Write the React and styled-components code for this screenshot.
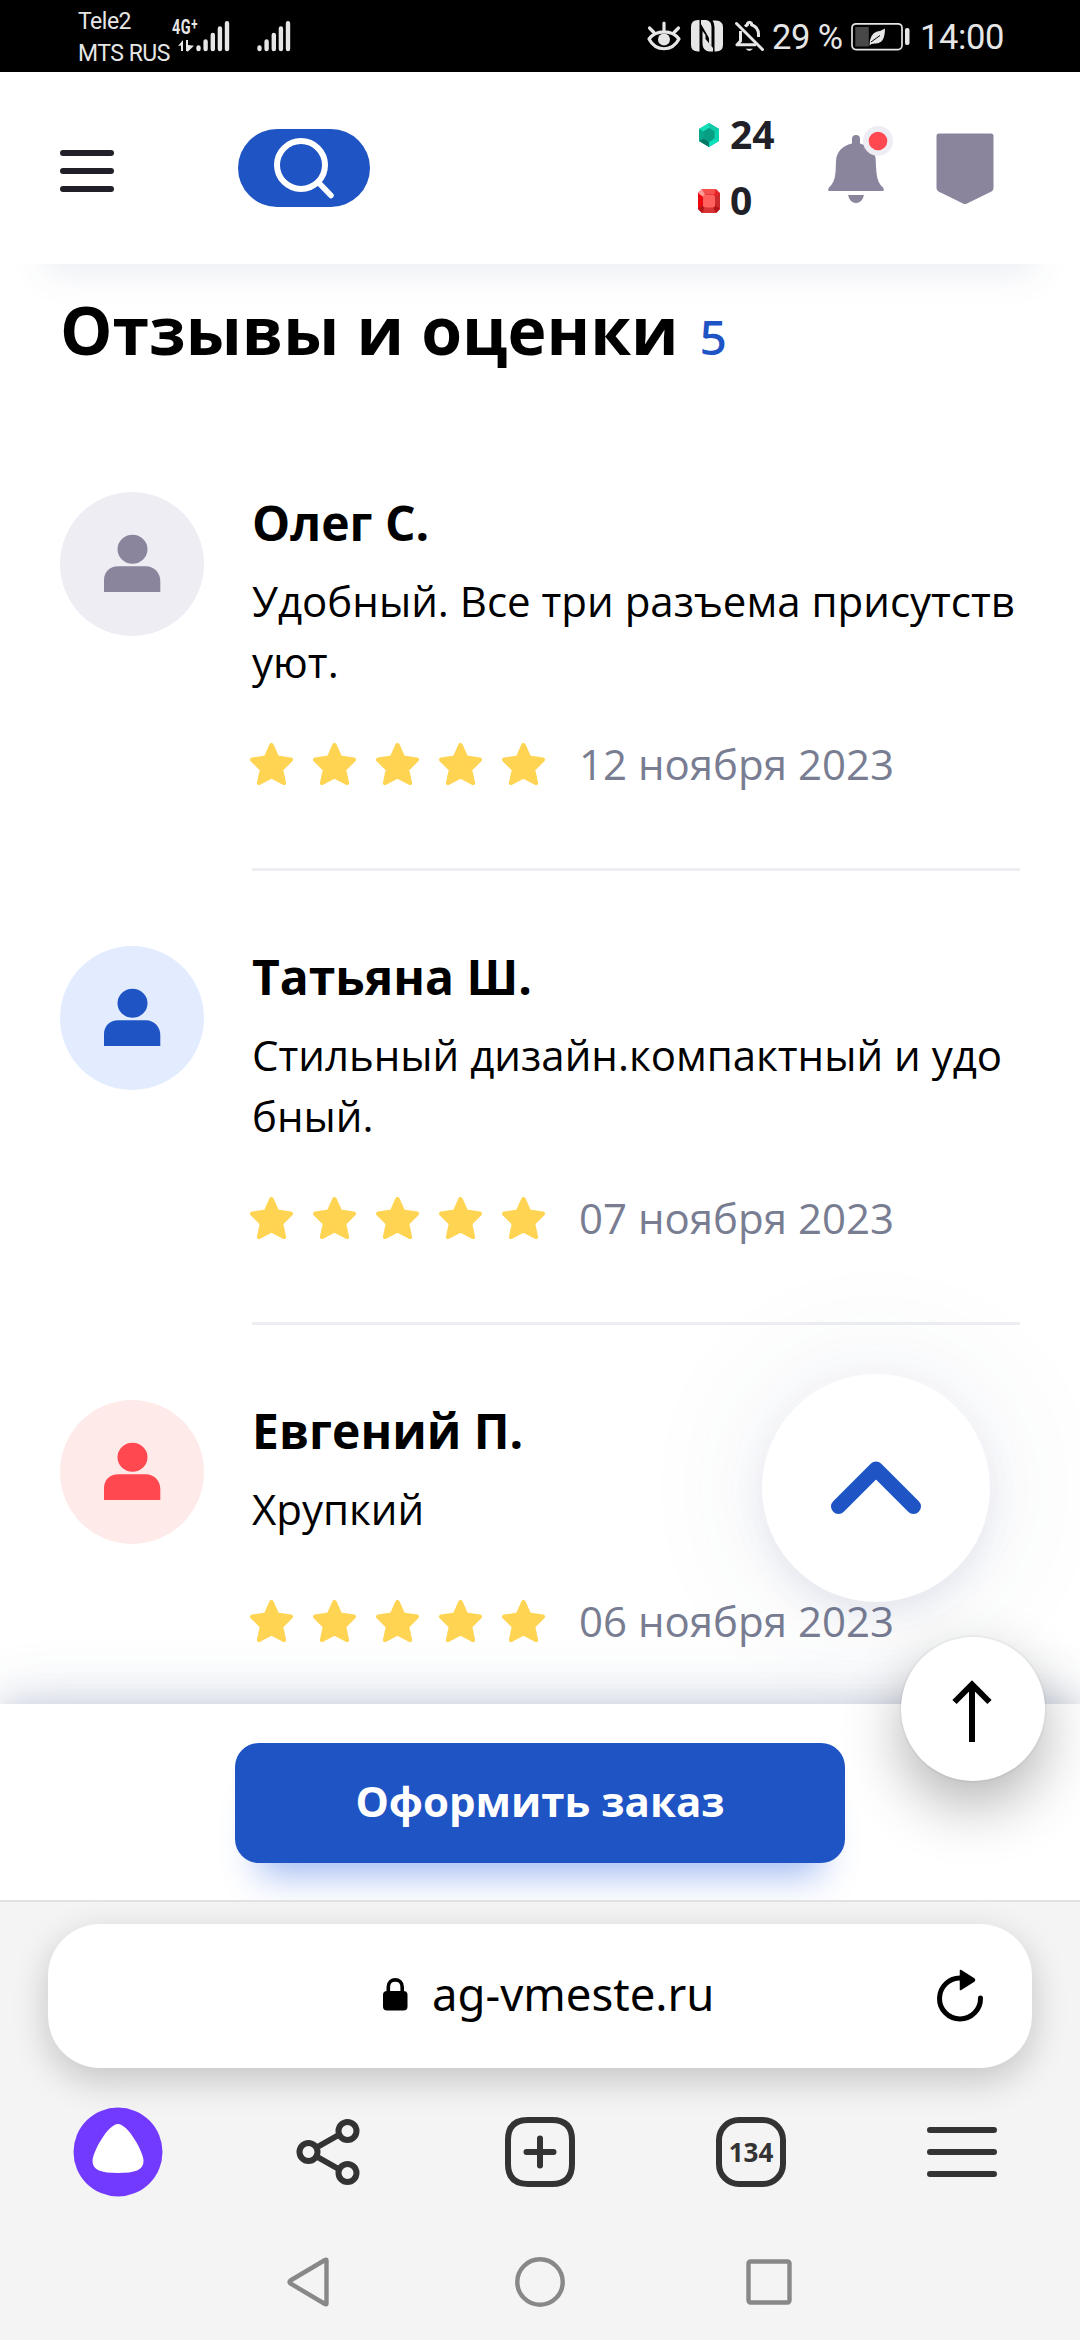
import React from "react";
import styled, { createGlobalStyle } from "styled-components";

const Global = createGlobalStyle`
  * { box-sizing: border-box; }
  body { margin: 0; background: #fff; }
`;

const Screen = styled.div`
  position: relative;
  width: 1080px;
  height: 2340px;
  display: grid;
  grid-template-rows: 72px 192px 1440px 196px 440px;
  overflow: hidden;
  background: #fff;
  color: #000;
  font-family: "Open Sans", "Noto Sans", sans-serif;
  svg { display: block; flex: none; }
`;

/* ---------- system status bar ---------- */
const StatusBar = styled.div`
  display: flex;
  justify-content: space-between;
  align-items: flex-start;
  background: #000;
  color: #e6e6e6;
  font-family: Roboto, sans-serif;
  padding: 0 77px 0 78px;
`;
const StatusGroup = styled.div`
  display: flex;
  height: 72px;
`;
const Carriers = styled.div`
  padding-top: 6px;
  width: 94px;
  font-size: 23px;
  line-height: 32px;
  white-space: nowrap;
  letter-spacing: -0.5px;
`;
const Network = styled.div`
  width: 24px;
  padding-top: 18px;
  display: flex;
  flex-direction: column;
  align-items: flex-start;
  gap: 3px;
`;
const NetworkType = styled.span`
  font-size: 20px;
  line-height: 19px;
  height: 19px;
  font-weight: 700;
  white-space: nowrap;
  transform: scaleX(0.72);
  transform-origin: left;
  letter-spacing: 0.8px;
  sup { font-size: 16px; line-height: 0; vertical-align: 4px; }
`;
const Arrows = styled.svg` margin-left: 6px; `;
const Signal = styled.svg`
  margin: 20px ${(p) => p.$after || 0}px 0 0;
`;
const StatusIcon = styled.svg`
  margin: 20px ${(p) => p.$after}px 0 0;
`;
const StatusText = styled.span`
  font-size: 34.5px;
  line-height: 74px;
  white-space: nowrap;
  width: ${(p) => p.$w}px;
  letter-spacing: ${(p) => p.$ls || 0}px;
`;

const SignalBars = ({ after }) => (
  <Signal $after={after} width="34" height="32" viewBox="0 0 34 32" fill="none" stroke="#e6e6e6" strokeWidth="4.4" strokeLinecap="round">
    <path d="M2.5 27.5V29M9.6 21.5V29M16.8 15V29M23.9 8.5V29M31 3.2V29" />
  </Signal>
);

/* ---------- site header ---------- */
const Header = styled.header`
  position: relative;
  z-index: 2;
  display: flex;
  align-items: flex-start;
  padding: 57px 86px 0 60px;
  background: #fff;
  box-shadow: 0 54px 36px -45px rgba(60, 80, 125, 0.1);
`;
const Burger = styled.button`
  display: flex;
  flex-direction: column;
  gap: 12px;
  width: 54px;
  margin: 21px 124px 0 0;
  padding: 0;
  border: 0;
  background: none;
`;
const BurgerBar = styled.span`
  height: 6px;
  border-radius: 3px;
  background: #211f27;
`;
const SearchButton = styled.button`
  display: flex;
  width: 132px;
  height: 78px;
  padding: 8px 0 0 35px;
  border: 0;
  border-radius: 39px;
  background: #1f54c5;
`;
const Balance = styled.div`
  margin-left: auto;
  margin-top: -27px;
  width: 130px;
  display: flex;
  flex-direction: column;
`;
const BalanceRow = styled.div`
  display: flex;
  align-items: center;
  gap: 10px;
  height: 66px;
  font-size: 39px;
  font-weight: 700;
  line-height: 66px;
  color: #211f27;
`;
const BalanceValue = styled.span`
  height: 68px;
`;
const BellIcon = styled.svg` margin: -3px 42px 0 0; `;
const ShieldIcon = styled.svg` margin-top: 4px; `;

/* ---------- reviews ---------- */
const Reviews = styled.main`
  padding: 20px 60px 0;
  overflow: hidden;
`;
const Heading = styled.h1`
  display: flex;
  align-items: flex-start;
  gap: 21px;
  height: 90px;
  margin: 0 0 118px;
  font-size: 66px;
  line-height: 90px;
  font-weight: 700;
  white-space: nowrap;
`;
const Count = styled.span`
  padding-top: 8px;
  font-family: "Noto Sans", "Open Sans", sans-serif;
  font-size: 48px;
  font-weight: 500;
  color: #1f54c5;
`;
const Review = styled.article`
  display: grid;
  grid-template-columns: 144px 768px;
  column-gap: 48px;
  margin-bottom: 75px;
`;
const Avatar = styled.div`
  width: 144px;
  height: 144px;
  border-radius: 50%;
  background: ${(p) => p.$bg};
  padding: 42px 0 0 44px;
`;
const ReviewBody = styled.div`
  padding-bottom: 75px;
  border-bottom: 3px solid #eeeef2;
`;
const Author = styled.h2`
  margin: 0 0 17px;
  padding-top: 1px;
  font-size: 48px;
  line-height: 60px;
  font-weight: 700;
`;
const Comment = styled.p`
  margin: 0 0 43px;
  min-height: 71px;
  font-size: 42px;
  line-height: 61px;
  white-space: nowrap;
`;
const Meta = styled.div`
  display: flex;
  align-items: center;
  height: 58px;
`;
const Stars = styled.div`
  display: flex;
  gap: 20px;
  margin: 0 34px 0 -2px;
`;
const ReviewDate = styled.time`
  font-size: 42px;
  line-height: 58px;
  color: #787d92;
  white-space: nowrap;
`;

/* ---------- order bar ---------- */
const OrderBar = styled.div`
  position: relative;
  z-index: 1;
  display: flex;
  justify-content: center;
  align-items: flex-start;
  padding-top: 39px;
  background: #fff;
  box-shadow: 0 0 60px rgba(60, 85, 135, 0.2), 0 0 30px rgba(60, 85, 135, 0.18);
`;
const OrderButton = styled.button`
  width: 610px;
  height: 120px;
  padding: 0 0 4px;
  border: 0;
  border-radius: 24px;
  background: #1f54c5;
  box-shadow: 0 36px 36px -24px rgba(45, 100, 225, 0.45);
  color: #fff;
  font: 700 42px/58px "Open Sans", "Noto Sans", sans-serif;
`;

/* ---------- floating buttons ---------- */
const ScrollUp = styled.button`
  position: absolute;
  z-index: 3;
  left: 762px;
  top: 1374px;
  width: 228px;
  height: 228px;
  padding: 0;
  display: grid;
  place-items: center;
  border: 0;
  border-radius: 50%;
  background: #fff;
  box-shadow: 0 0 132px rgba(60, 75, 130, 0.1), 0 14px 36px -6px rgba(60, 70, 130, 0.12);
`;
const JumpTop = styled(ScrollUp)`
  left: 901px;
  top: 1637px;
  width: 144px;
  height: 144px;
  padding-top: 4px;
  box-shadow: 0 0 0 2px rgba(0, 0, 0, 0.03), 0 24px 60px rgba(0, 0, 0, 0.3);
`;

/* ---------- browser chrome ---------- */
const Browser = styled.footer`
  position: relative;
  z-index: 2;
  display: grid;
  grid-template-rows: 144px 129px auto;
  align-content: start;
  padding: 22px 48px 0;
  border-top: 2px solid #e2e2e2;
  background: #f4f4f4;
`;
const AddressBar = styled.div`
  display: flex;
  align-items: flex-start;
  height: 144px;
  padding: 0 48px 0 335px;
  border-radius: 52px;
  background: #fff;
  box-shadow: 0 12px 36px rgba(0, 0, 0, 0.2);
`;
const LockIcon = styled.svg` margin-top: 54px; `;
const Url = styled.span`
  margin-left: 24px;
  font-family: "Noto Sans", sans-serif;
  font-size: 45.5px;
  line-height: 138px;
`;
const ReloadIcon = styled.svg` margin: 44px 0 0 auto; `;
const Toolbar = styled.nav`
  display: flex;
  justify-content: space-between;
  align-items: flex-start;
  margin: 39px 25px 0;
  height: 90px;
`;
const ToolSlot = styled.div`
  display: flex;
  align-items: center;
  justify-content: center;
  height: 90px;
  width: 90px;
`;
const TabCount = styled.div`
  display: grid;
  place-items: center;
  width: 70px;
  height: 70px;
  border: 6px solid #333;
  border-radius: 23px;
  color: #333;
  font-family: "Noto Sans", sans-serif;
  font-size: 26px;
  line-height: 28px;
  font-weight: 700;
`;
const SystemNav = styled.nav`
  display: flex;
  justify-content: space-between;
  align-items: center;
  width: 506px;
  margin-left: 238px;
  margin-top: 59px;
  height: 52px;
`;
const HomeIcon = styled.svg` margin-left: 4px; `;

const STAR = "M21.5 2.2 27.2 14.8 40.8 16.7 31 26.4 33.9 39.9 21.5 33.2 9.1 39.9 12 26.4 2.2 16.7 15.8 14.8Z";

const reviews = [
  { name: "Олег С.", lines: ["Удобный. Все три разъема присутств", "уют."], date: "12 ноября 2023", bg: "#eeedf3", fg: "#8b849d" },
  { name: "Татьяна Ш.", lines: ["Стильный дизайн.компактный и удо", "бный."], date: "07 ноября 2023", bg: "#e3ecff", fg: "#1f54c5" },
  { name: "Евгений П.", lines: ["Хрупкий"], date: "06 ноября 2023", bg: "#ffeaea", fg: "#ff484f" },
];

function ReviewItem({ name, lines, date, bg, fg }) {
  return (
    <Review>
      <Avatar $bg={bg}>
        <svg width="58" height="60" viewBox="0 0 58 60" fill={fg}>
          <ellipse cx="28.5" cy="15.3" rx="15" ry="14.5" />
          <path d="M0 58V46C0 38 6 32.3 14 32.3H42C50 32.3 56.3 39 56.3 47V58Z" />
        </svg>
      </Avatar>
      <ReviewBody>
        <Author>{name}</Author>
        <Comment>
          {lines.map((line, i) => (
            <React.Fragment key={line}>
              {i > 0 && <br />}
              {line}
            </React.Fragment>
          ))}
        </Comment>
        <Meta>
          <Stars>
            {[0, 1, 2, 3, 4].map((n) => (
              <svg key={n} width="43" height="42" viewBox="0 0 43 42">
                <path d={STAR} fill="#ffd452" stroke="#ffd452" strokeWidth="4.4" strokeLinejoin="round" />
              </svg>
            ))}
          </Stars>
          <ReviewDate>{date}</ReviewDate>
        </Meta>
      </ReviewBody>
    </Review>
  );
}

export default function App() {
  return (
    <Screen>
      <Global />
      <StatusBar>
        <StatusGroup>
          <Carriers>
            <div>Tele2</div>
            <div>MTS RUS</div>
          </Carriers>
          <Network>
            <NetworkType>4G<sup>+</sup></NetworkType>
            <Arrows width="16" height="12" viewBox="0 0 16 12" fill="#e6e6e6">
              <path d="M0 6 5 0V11H3V5.5ZM8 0H10V5L16 5.8 10 11.5 8 11Z" />
            </Arrows>
          </Network>
          <SignalBars after={27} />
          <SignalBars />
        </StatusGroup>
        <StatusGroup>
          <StatusIcon $after={10} width="34" height="32" viewBox="0 0 34 32" fill="none" stroke="#e6e6e6" strokeWidth="3.2" strokeLinecap="round">
            <path d="M2 19C9 9.5 25 9.5 32 19C25 32 9 32 2 19Z" strokeLinejoin="round" />
            <path d="M17 3V10M2.5 8 7 12.5M31.5 8 27 12.5" />
            <circle cx="17" cy="19.5" r="6" fill="#e6e6e6" stroke="none" />
          </StatusIcon>
          <StatusIcon $after={12} width="32" height="32" viewBox="0 0 32 32">
            <path d="M7 0H8.5V31.5H7Q0 31 0 25V7Q0 0 7 0Z" fill="#e6e6e6" />
            <path d="M10 0H15Q20.5 1 20.5 7V26L18 23.5V18L10 4Z" fill="#e6e6e6" />
            <path d="M25 .5Q32 1 32 7V25Q32 31 25 31.5H23.5V7Q23.5 3 21.5 .5Z" fill="#e6e6e6" />
            <path d="M11.5 11V24Q12 31 18 31.5H22V28L14.5 19V15Z" fill="#e6e6e6" />
          </StatusIcon>
          <StatusIcon $after={8} width="29" height="32" viewBox="0 0 29 32" fill="none" stroke="#e6e6e6" strokeWidth="3">
            <path d="M5.5 11V21L2 24.8H21M10 6.5C11 5.5 12 5 12.5 4.7V3.5Q14.5 .8 16.5 3.5V4.7Q23.5 7 23.5 14.5V17" strokeLinejoin="round" />
            <path d="M1.5 3.5 27.5 29.5" strokeLinecap="round" />
            <path d="M10.5 28.8H18Q14.3 33 10.5 28.8Z" fill="#e6e6e6" stroke="none" />
          </StatusIcon>
          <StatusText $w={79} $ls={-0.5}>29 %</StatusText>
          <StatusIcon $after={10} width="59" height="32" viewBox="0 0 59 32">
            <rect x="1" y="3.8" width="50" height="25.8" rx="4" fill="none" stroke="#e6e6e6" strokeWidth="1.7" />
            <rect x="4.3" y="7" width="13.5" height="19.5" fill="#484848" />
            <path d="M34 8.5Q34 24 24 23.5L20.5 24 18.5 25.5Q18.5 14 26 11.5Q30 11 34 8.5Z" fill="#e6e6e6" />
            <path d="M20 22 29 15.5" stroke="#000" strokeWidth="1" />
            <rect x="54" y="8" width="4.5" height="17" rx="2" fill="#e6e6e6" />
          </StatusIcon>
          <StatusText $w={83} $ls={-0.4}>14:00</StatusText>
        </StatusGroup>
      </StatusBar>

      <Header>
        <Burger aria-label="menu"><BurgerBar /><BurgerBar /><BurgerBar /></Burger>
        <SearchButton aria-label="search">
          <svg width="62" height="64" viewBox="0 0 62 64" fill="none" stroke="#fff">
            <circle cx="28" cy="28" r="24" strokeWidth="6" />
            <path d="M46 46 58 58.5" strokeWidth="5.5" strokeLinecap="round" />
          </svg>
        </SearchButton>
        <Balance>
          <BalanceRow>
            <svg width="22" height="24" viewBox="0 0 22 24">
              <path d="M11 0 21 6V18L11 24 1 18V6Z" fill="#08b997" />
              <path d="M1 6 11 0 11 5 5.5 8.5Z" fill="#13dfb9" />
              <path d="M11 0 21 6 16.5 8.5 11 5Z" fill="#10c9a7" />
              <path d="M1 6 5.5 8.5V15.5L1 18Z" fill="#07a98a" />
              <path d="M21 6V18L16.5 15.5V8.5Z" fill="#0ad3b0" />
              <path d="M1 18 5.5 15.5 11 19V24Z" fill="#067865" />
              <path d="M11 24V19L16.5 15.5 21 18Z" fill="#09e0bd" />
              <path d="M11 5 16.5 8.5V15.5L11 19 5.5 15.5V8.5Z" fill="#089e83" />
            </svg>
            <BalanceValue>24</BalanceValue>
          </BalanceRow>
          <BalanceRow>
            <svg width="22" height="24" viewBox="0 0 22 24">
              <path d="M4 0H18L22 4V20L18 24H4L0 20V4Z" fill="#e72529" />
              <path d="M4 0H18L16 5.5H6Z" fill="#f4504e" />
              <path d="M0 4 4 0 7 6 5 8Z" fill="#ff9c97" />
              <path d="M0 4 5 8V16L0 20Z" fill="#ee0910" />
              <path d="M22 4V20L17 16V8Z" fill="#c92b2c" />
              <path d="M4 24 6 18H16L18 24Z" fill="#d83435" />
              <path d="M0 20 5 16 7 18 4 24ZM22 20 17 16 15 18 18 24Z" fill="#b51519" />
              <rect x="5" y="6" width="12" height="12.5" rx="2" fill="#ff615f" />
            </svg>
            <BalanceValue>0</BalanceValue>
          </BalanceRow>
        </Balance>
        <BellIcon width="66" height="78" viewBox="0 0 66 78">
          <path d="M24 13Q24 9 28 9T32 13V17.5Q43 20 47.5 31C48.5 45 47.5 55 55 61.5Q57 65 54.5 65H1.5Q-1 65 1 61.5C8.5 55 7.5 45 8 35C8.5 26 14 20 24 17.5Z" fill="#8b849d" />
          <path d="M20 69H36Q34 77 28 77T20 69Z" fill="#8b849d" />
          <circle cx="50" cy="15" r="15" fill="#eeedf3" />
          <circle cx="50" cy="15" r="9.3" fill="#ff484f" />
        </BellIcon>
        <ShieldIcon width="58" height="72" viewBox="0 0 58 72">
          <path d="M3 .5H55Q57.5 .5 57.5 3V55Q57.5 57.5 55.5 58.5L31 70.5Q29 71.5 27 70.5L2.5 58.5Q.5 57.5 .5 55V3Q.5 .5 3 .5Z" fill="#8b849d" />
        </ShieldIcon>
      </Header>

      <Reviews>
        <Heading>Отзывы и оценки <Count>5</Count></Heading>
        {reviews.map((r) => <ReviewItem key={r.name} {...r} />)}
      </Reviews>

      <OrderBar>
        <OrderButton>Оформить заказ</OrderButton>
      </OrderBar>

      <Browser>
        <AddressBar>
          <LockIcon width="25" height="33" viewBox="0 0 25 33">
            <rect x="0" y="13" width="24.5" height="19.5" rx="4" fill="#000" />
            <path d="M5.3 15V9C5.3 -.5 19.2 -.5 19.2 9V15" fill="none" stroke="#000" strokeWidth="3.6" />
          </LockIcon>
          <Url>ag-vmeste.ru</Url>
          <ReloadIcon width="48" height="54" viewBox="0 0 48 54">
            <path d="M25 10A20.5 20.5 0 1 0 44.5 30" fill="none" stroke="#000" strokeWidth="5" strokeLinecap="round" />
            <path d="M24.5 2.5 38 11Q39 12 38 13L24.5 21.5Z" fill="#000" stroke="#000" strokeWidth="1.5" strokeLinejoin="round" />
          </ReloadIcon>
        </AddressBar>
        <Toolbar>
          <ToolSlot>
            <svg width="90" height="90" viewBox="0 0 90 90">
              <circle cx="45" cy="45" r="44.5" fill="#7239ff" />
              <path d="M45 17C55 17 70.5 45 70.5 54C70.5 63 62 66 45 66S19.5 63 19.5 54C19.5 45 35 17 45 17Z" fill="#fff" />
            </svg>
          </ToolSlot>
          <ToolSlot>
            <svg width="66" height="68" viewBox="0 0 66 68" fill="none" stroke="#333" strokeWidth="6">
              <circle cx="12.5" cy="34" r="9" /><circle cx="51.5" cy="13" r="9" /><circle cx="51.5" cy="55" r="9" />
              <path d="M20.5 29.5 43.5 16.5M20.5 38.5 43.5 51.5" />
            </svg>
          </ToolSlot>
          <ToolSlot>
            <svg width="70" height="70" viewBox="0 0 70 70" fill="none" stroke="#333" strokeWidth="6" strokeLinecap="round">
              <path d="M23 3H47Q67 3 67 23V47Q67 67 47 67H23Q3 67 3 47V23Q3 3 23 3Z" />
              <path d="M35 21.5V48.5M21.5 35H48.5" />
            </svg>
          </ToolSlot>
          <ToolSlot><TabCount>134</TabCount></ToolSlot>
          <ToolSlot>
            <svg width="70" height="52" viewBox="0 0 70 52" stroke="#333" strokeWidth="6" strokeLinecap="round">
              <path d="M3 4H67M3 26H67M3 48H67" />
            </svg>
          </ToolSlot>
        </Toolbar>
        <SystemNav>
          <svg width="44" height="52" viewBox="0 0 44 52" fill="none" stroke="#888" strokeWidth="4.4" strokeLinejoin="round">
            <path d="M40.5 4.5V47.5Q40.5 49 39 48L4.5 27.5Q2.5 26 4.5 24.5L39 4Q40.5 3 40.5 4.5Z" />
          </svg>
          <HomeIcon width="52" height="52" viewBox="0 0 52 52" fill="none" stroke="#888" strokeWidth="4.4">
            <circle cx="26" cy="26" r="22.7" />
          </HomeIcon>
          <svg width="46" height="46" viewBox="0 0 46 46" fill="none" stroke="#888" strokeWidth="4.4">
            <rect x="2.5" y="2.5" width="41" height="41" rx="2" />
          </svg>
        </SystemNav>
      </Browser>

      <ScrollUp aria-label="up">
        <svg width="92" height="56" viewBox="0 0 92 56" fill="none" stroke="#1f54c5" strokeWidth="15" strokeLinecap="round" strokeLinejoin="round">
          <path d="M8.5 46.5 46 9 83.5 46.5" />
        </svg>
      </ScrollUp>
      <JumpTop aria-label="top">
        <svg width="42" height="64" viewBox="0 0 42 64" fill="none" stroke="#000" strokeWidth="6">
          <path d="M20 5V63M2.5 23 20 5.5 37.5 23" />
        </svg>
      </JumpTop>
    </Screen>
  );
}
